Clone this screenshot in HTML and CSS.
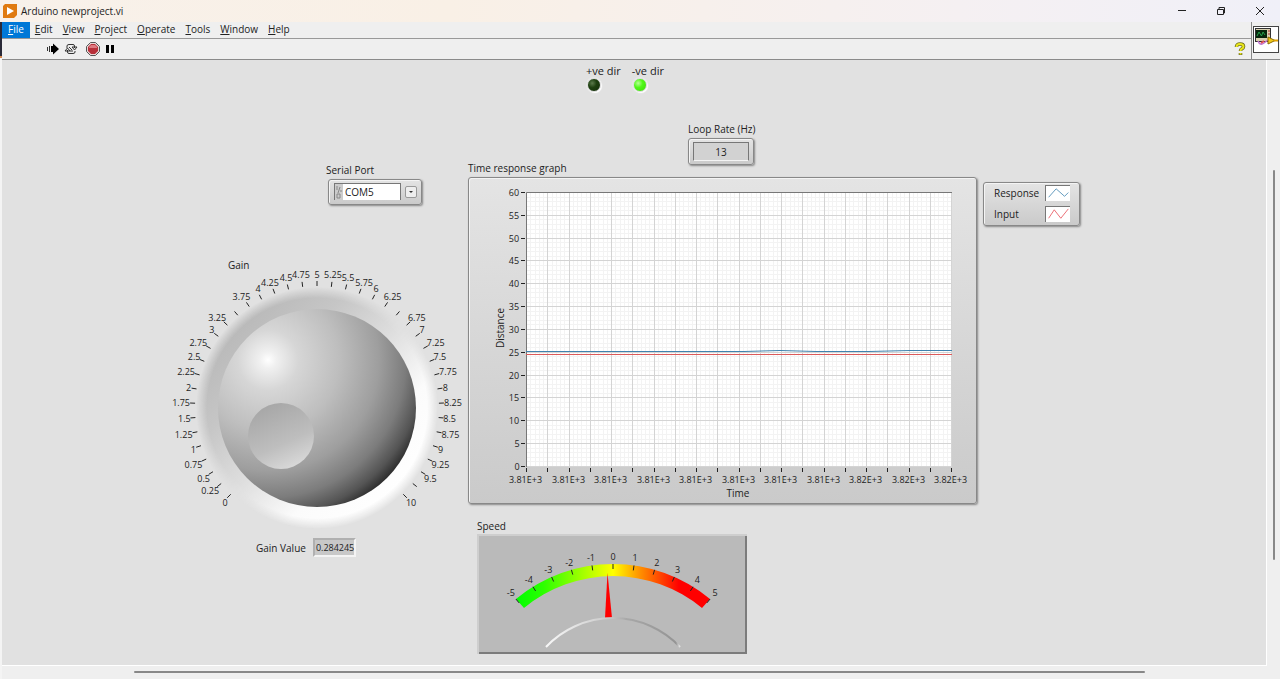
FILE: index.html
```html
<!DOCTYPE html>
<html lang="en">
<head>
    <meta charset="UTF-8">
    <meta name="viewport" content="width=device-width, initial-scale=1.0">
    <title>Arduino newproject.vi</title>
    <link rel="stylesheet" href="styles.css">
</head>
<body>
    <header class="titlebar">
        <svg class="app-icon" viewBox="0 0 14 14">
            <path d="M2 0H14V11L11 14H0V2Z" fill="#e07a10"/>
            <path d="M4 3L11 7L4 11Z" fill="#fff"/>
        </svg>
        <h1>Arduino newproject.vi</h1>
        <div class="window-buttons">
            <button aria-label="Minimize"><svg viewBox="0 0 10 10"><path d="M1 4.5H9"/></svg></button>
            <button aria-label="Restore"><svg viewBox="0 0 10 10"><path d="M1.5 3.5H7.5V8.5H1.5ZM3 3.5V1.5H8.5V7H7.5"/></svg></button>
            <button aria-label="Close"><svg viewBox="0 0 10 10"><path d="M1 1L9 9M9 1L1 9"/></svg></button>
        </div>
    </header>

    <div class="window">
        <div class="edge"></div>
        <div class="main">
            <div class="bars">
                <div class="bars-left">
                    <nav class="menu">
                        <button class="active"><u>F</u>ile</button>
                        <button><u>E</u>dit</button>
                        <button><u>V</u>iew</button>
                        <button><u>P</u>roject</button>
                        <button><u>O</u>perate</button>
                        <button><u>T</u>ools</button>
                        <button><u>W</u>indow</button>
                        <button><u>H</u>elp</button>
                    </nav>
                    <div class="toolbar">
                        <button aria-label="Run">
                            <svg viewBox="0 0 14 14">
                                <path d="M1.5 5V9M3.5 4V10" stroke="#333"/>
                                <path d="M5 4H7V1.5L13 7L7 12.5V10H5Z" fill="#000"/>
                            </svg>
                        </button>
                        <button aria-label="Run continuously">
                            <svg viewBox="0 0 14 14" fill="none" stroke="#333">
                                <path d="M3 6V4Q3 2.500 5 2.500H9Q10.500 2.500 10.500 4V6M8 5L10.500 8L13 5Z"/>
                                <path d="M11 9V10Q11 11.500 9 11.500H5Q3.500 11.500 3.500 10V8M1 9L3.500 6L6 9Z"/>
                                <path d="M5 5L8 8M6 9H9"/>
                            </svg>
                        </button>
                        <button class="abort" aria-label="Abort">
                            <svg viewBox="0 0 14 14">
                                <path d="M4.500 .5H9.500L13.500 4.500V9.500L9.500 13.500H4.500L.5 9.500V4.500Z" fill="#e8d5d5" stroke="#555"/>
                                <path d="M5 2H9L12 5V9L9 12H5L2 9V5Z" fill="#b8303a"/>
                                <path d="M5 3H9L11 5V6H3V5Z" fill="#dd7a80"/>
                            </svg>
                        </button>
                        <button class="pause" aria-label="Pause">
                            <svg viewBox="0 0 14 14"><path d="M2 3H5V11H2ZM7 3H10V11H7Z" fill="#000"/></svg>
                        </button>
                        <button class="help" aria-label="Context help">
                            <svg viewBox="0 0 14 14" fill="none">
                                <path d="M3.500 5Q3.500 2 7 2Q10.500 2 10.500 4.500Q10.500 6 8.500 7Q7.500 7.500 7.500 9M7.500 11V13" stroke="#6b6b1c" stroke-width="3.600"/>
                                <path d="M3.500 5Q3.500 2 7 2Q10.500 2 10.500 4.500Q10.500 6 8.500 7Q7.500 7.500 7.500 9M7.500 11V12.500" stroke="#e9e61c" stroke-width="2"/>
                            </svg>
                        </button>
                    </div>
                </div>
                <div class="vi-icon">
                    <svg viewBox="0 0 26 27">
                        <rect x=".5" y=".5" width="25" height="26" fill="#fff" stroke="#444"/>
                        <rect x="2.500" y="2.500" width="15" height="13" fill="#d8d0b0" stroke="#333"/>
                        <rect x="3" y="4" width="11" height="8" fill="#06250c"/>
                        <path d="M4 10L6 6L8.500 10L10 6L12 9" stroke="#24a04a" fill="none"/>
                        <path d="M15 5H17M15 8H17" stroke="#a33"/>
                        <path d="M5 15Q7 20 11 17L15 14" stroke="#c070d0" fill="none" stroke-width="1.500"/>
                        <path d="M8 17L11 15" stroke="#e05050" stroke-width="2"/>
                        <path d="M15 11L22 14.500L15 18Z" fill="#f0c818" stroke="#8a6a00"/>
                        <path d="M21 14.500H25" stroke="#e0a000" stroke-width="2"/>
                    </svg>
                </div>
            </div>

            <div class="workspace">
                <main class="panel">
                    <section class="gain-col">
                        <div class="serial">
                            <label for="port">Serial Port</label>
                            <div class="port-box bevel">
                                <svg class="io" viewBox="0 0 8 16" fill="none" stroke="#888">
                                    <path d="M2 2V6M5 3L3 9M6 6V8M2 10H5V14H2Z"/>
                                </svg>
                                <select id="port"><option>COM5</option></select>
                                <span class="drop"></span>
                            </div>
                        </div>
                        <div class="gain-title">Gain</div>
                        <svg id="knob" class="knob" viewBox="-149 -137 298 260" role="img" aria-label="Gain">
                            <defs>
                                <linearGradient id="ring" x1="0.150" y1="0.150" x2="0.850" y2="0.850">
                                    <stop offset="0" stop-color="#b8b8b8"/>
                                    <stop offset=".25" stop-color="#c6c6c6"/>
                                    <stop offset=".5" stop-color="#dedede"/>
                                    <stop offset=".75" stop-color="#fbfbfb"/>
                                    <stop offset="1" stop-color="#fff"/>
                                </linearGradient>
                                <radialGradient id="fade">
                                    <stop offset=".91" stop-color="#fff"/>
                                    <stop offset="1" stop-color="#000"/>
                                </radialGradient>
                                <mask id="soft"><circle r="121" fill="url(#fade)"/></mask>
                                <radialGradient id="ball" gradientUnits="userSpaceOnUse" cx="-49" cy="-48" r="168">
                                    <stop offset="0" stop-color="#fff"/>
                                    <stop offset=".05" stop-color="#f0f0f0"/>
                                    <stop offset=".18" stop-color="#d6d6d6"/>
                                    <stop offset=".42" stop-color="#bebebe"/>
                                    <stop offset=".66" stop-color="#9e9e9e"/>
                                    <stop offset=".82" stop-color="#7c7c7c"/>
                                    <stop offset=".93" stop-color="#545454"/>
                                    <stop offset="1" stop-color="#2c2c2c"/>
                                </radialGradient>
                                <linearGradient id="dimple" x1=".3" y1="0" x2=".75" y2="1">
                                    <stop offset="0" stop-color="#a6a6a6"/>
                                    <stop offset=".6" stop-color="#bebebe"/>
                                    <stop offset="1" stop-color="#dcdcdc"/>
                                </linearGradient>
                            </defs>
                            <circle r="121" fill="url(#ring)" mask="url(#soft)"/>
                            <circle r="99" fill="url(#ball)"/>
                            <circle cx="-36" cy="28" r="33" fill="url(#dimple)"/>
                            <g class="scale"></g>
                        </svg>
                        <div class="gain-value">
                            <label for="gain">Gain Value</label>
                            <input id="gain" type="text" value="0.284245" readonly>
                        </div>
                    </section>

                    <section class="graph-col">
                        <div class="leds">
                            <div class="led-item">+ve dir<span class="led"></span></div>
                            <div class="led-item">-ve dir<span class="led on"></span></div>
                        </div>
                        <div class="graph-head">
                            <h2>Time response graph</h2>
                            <div class="loop">
                                <label for="rate">Loop Rate (Hz)</label>
                                <div class="rate-box bevel"><input id="rate" type="text" value="13" readonly></div>
                            </div>
                        </div>
                        <div class="graph bevel">
                            <svg id="chart" viewBox="0 0 507 325" role="img" aria-label="Time response graph">
                                <rect x="57" y="14" width="426" height="275" fill="#fff"/>
                                <g class="grid"></g>
                                <path d="M57.500 289V14.500H483" fill="none" stroke="#777"/>
                                <path d="M57 176.500H483" class="line-input"/>
                                <path d="M57 173.500H275L311 172.500L347 173.500H400L441 172.500H483" class="line-response"/>
                                <g class="axes"></g>
                                <text class="title" x="269" y="315">Time</text>
                                <text class="title" transform="translate(31 150) rotate(-90)">Distance</text>
                            </svg>
                        </div>
                        <h2 class="speed-title">Speed</h2>
                        <div class="meter">
                            <svg id="meter" viewBox="-136 -182 270 120" role="img" aria-label="Speed">
                                <defs>
                                    <linearGradient id="speed" gradientUnits="userSpaceOnUse" x1="-97" y1="0" x2="97" y2="0">
                                        <stop offset="0" stop-color="#0f0"/>
                                        <stop offset=".14" stop-color="#2cff00"/>
                                        <stop offset=".5" stop-color="#ff0"/>
                                        <stop offset=".64" stop-color="#ff9000"/>
                                        <stop offset=".84" stop-color="#f00"/>
                                        <stop offset="1" stop-color="#f00"/>
                                    </linearGradient>
                                    <linearGradient id="hub" x1="0" x2="1">
                                        <stop offset="0" stop-color="#f8f8f8"/>
                                        <stop offset=".45" stop-color="#ccc"/>
                                        <stop offset=".6" stop-color="#a8a8a8"/>
                                        <stop offset=".97" stop-color="#949494"/>
                                        <stop offset="1" stop-color="#e8e8e8"/>
                                    </linearGradient>
                                </defs>
                                <path d="M-97 -117A152 152 0 0 1 97 -117L89 -108A140 140 0 0 0 -89 -108Z" fill="url(#speed)"/>
                                <path d="M-5.500 -143L-1 -98H-8Z" fill="#f00"/>
                                <path d="M-67 -69A92 92 0 0 1 67 -69" fill="none" stroke="url(#hub)" stroke-width="2"/>
                                <g class="scale"></g>
                            </svg>
                        </div>
                    </section>

                    <section class="legend-col">
                        <ul class="legend bevel">
                            <li>Response
                                <svg viewBox="0 0 24 16"><path d="M2 12L10 3L19 11L23 7" stroke="#5b95bb"/></svg>
                            </li>
                            <li>Input
                                <svg viewBox="0 0 24 16"><path d="M2 12L8 3L15 12L23 2" stroke="#ea6870"/></svg>
                            </li>
                        </ul>
                    </section>
                </main>
                <div class="vscroll"><div class="thumb"></div></div>
            </div>
            <div class="hscroll"><div class="thumb"></div></div>
        </div>
    </div>
    <script src="script.js"></script>
</body>
</html>
```
FILE: styles.css
```css
* {
    box-sizing: border-box;
}
body {
    margin: 0;
    min-height: 100vh;
    display: flex;
    flex-direction: column;
    background-color: #efefef;
    color: #222;
    font-family: "Open Sans", sans-serif;
    font-size: 10px;
    line-height: 12px;
}
button, input, select {
    font: inherit;
    color: inherit;
}
button {
    border: none;
    background: none;
    padding: 0;
}
svg {
    display: block;
}
h1, h2 {
    margin: 0;
    font-size: inherit;
    font-weight: normal;
}
.titlebar {
    display: flex;
    align-items: center;
    height: 22px;
    padding-left: 3px;
    background: linear-gradient(to right, #f8f1ea, #f9f0e6 35%, #f5f0f2 75%, #f0f0f8);
}
.app-icon {
    width: 14px;
    height: 14px;
    margin-right: 4px;
}
.window-buttons {
    display: flex;
    margin-left: auto;
    padding-right: 1px;
}
.window-buttons button {
    width: 39px;
    height: 20px;
    display: flex;
    align-items: center;
    justify-content: center;
}
.window-buttons svg {
    width: 10px;
    height: 10px;
    fill: none;
    stroke: #222;
}
.window {
    flex: 1;
    display: flex;
}
.edge {
    width: 2px;
    background: linear-gradient(#2a2a38 34px, #d98a50 34px, #d98a50 36px, #f4f4f4 36px);
}
.main {
    flex: 1;
    min-width: 0;
    display: flex;
    flex-direction: column;
}
.bars {
    display: flex;
    border-bottom: 1px solid #8a8a8a;
}
.bars-left {
    flex: 1;
    border-right: 1px solid #8a8a8a;
}
.menu {
    display: flex;
    height: 17px;
    border-bottom: 1px solid #999;
}
.menu button {
    padding: 0 5px 2px;
    line-height: 12px;
}
.menu .active {
    padding: 0 6px 2px;
    background-color: #0078d7;
    color: #fff;
}
.toolbar {
    display: flex;
    align-items: center;
    height: 20px;
    padding-left: 44px;
    gap: 4px;
}
.toolbar svg {
    width: 14px;
    height: 14px;
}
.abort {
    margin-left: 4px;
}
.toolbar .help {
    margin-left: auto;
    margin-right: 4px;
}
.vi-icon {
    width: 28px;
    padding: 4px 1px;
}
.vi-icon svg {
    width: 26px;
    height: 27px;
}
.workspace {
    flex: 1;
    display: flex;
}
.panel {
    flex: 1;
    display: grid;
    grid-template-columns: 466px minmax(0, 1fr) 289px;
    background-color: #e1e1e1;
    border-right: 1px solid #fff;
    border-bottom: 1px solid #fff;
}
.vscroll {
    width: 13px;
    padding: 110px 5px 0 6px;
}
.vscroll .thumb {
    height: 390px;
    border-radius: 1px;
    background-color: #888;
}
.hscroll {
    height: 13px;
    padding: 5px 135px 0 132px;
}
.hscroll .thumb {
    height: 2px;
    border-radius: 1px;
    background-color: #888;
}
.bevel {
    border: 1px solid #888;
    border-radius: 3px;
    background: linear-gradient(#e4e4e4, #cacaca);
    box-shadow: inset 1px 1px 0 #f4f4f4, 1px 1px 2px rgba(0, 0, 0, 0.4);
}
.gain-col {
    padding: 104px 0 0 166px;
}
.serial {
    padding-left: 158px;
}
.serial label {
    display: block;
    margin-bottom: 3px;
}
.port-box {
    display: flex;
    align-items: center;
    width: 94px;
    height: 26px;
    margin-left: 2px;
    padding: 0 4px 1px 5px;
}
.io {
    width: 9px;
    height: 17px;
    border: solid #777;
    border-width: 1px 0 0 1px;
    background-color: #ccc;
}
.port-box select {
    appearance: none;
    flex: 1;
    min-width: 0;
    height: 17px;
    padding: 0 2px 1px;
    border: solid #777;
    border-width: 1px 1px 0 0;
    border-radius: 0;
    background-color: #fff;
}
.drop {
    display: flex;
    align-items: center;
    justify-content: center;
    width: 12px;
    height: 12px;
    margin-left: 4px;
    border: 1px solid #999;
    border-radius: 2px;
    background-color: #eee;
}
.drop::after {
    content: "";
    border: 2px solid transparent;
    border-top-color: #333;
    border-bottom: none;
}
.gain-title {
    margin-top: 54px;
    padding-left: 60px;
}
.knob {
    width: 298px;
    height: 260px;
    overflow: visible;
}
svg text {
    font-size: 9px;
    fill: #222;
    text-anchor: middle;
    dominant-baseline: central;
}
svg .title {
    font-size: 10px;
}
.scale path, .axes path {
    stroke: #222;
    fill: none;
}
.gain-value {
    display: flex;
    align-items: center;
    gap: 7px;
    margin-top: 7px;
    padding-left: 88px;
}
.gain-value input {
    width: 43px;
    height: 19px;
    padding: 0 0 0 1px;
    border: 2px solid #b0b0b0;
    border-right-color: #f4f4f4;
    border-bottom-color: #f4f4f4;
    background-color: #c8c8c8;
    font-size: 9px;
}
.leds {
    display: flex;
    gap: 11px;
    padding: 5px 0 0 118px;
    font-size: 11px;
}
.led {
    display: block;
    width: 14px;
    height: 14px;
    margin: 1px 0 0 1px;
    border-radius: 50%;
    border: 1px solid #ddd;
    background: radial-gradient(circle at 35% 35%, #5c7a4c, #1e4010 40%, #142c0a);
    box-shadow: 0 0 2px #fff, 1px 1px 1px #fff;
}
.led.on {
    background: radial-gradient(circle at 35% 35%, #b8ff98, #50f818 40%, #3cd808);
}
.graph-head {
    display: flex;
    align-items: flex-end;
    margin-top: 31px;
}
.graph-head h2 {
    width: 220px;
}
.loop {
    padding-bottom: 9px;
}
.loop label {
    display: block;
    white-space: nowrap;
    margin-bottom: 3px;
}
.rate-box {
    width: 66px;
    height: 27px;
    padding: 3px 4px;
}
.rate-box input {
    display: block;
    width: 100%;
    height: 19px;
    padding: 0;
    border: 1px solid #777;
    border-bottom-color: #f4f4f4;
    background-color: #d2d2d2;
    text-align: center;
}
.graph {
    margin-top: 3px;
}
.graph svg {
    width: 100%;
}
.minor {
    stroke: #f3f3f3;
}
.major {
    stroke: #d4d4d4;
}
.line-response {
    fill: none;
    stroke: #3f82ae;
}
.line-input {
    fill: none;
    stroke: #dc5a5a;
}
.speed-title {
    margin-top: 16px;
    padding-left: 9px;
}
.meter {
    width: 270px;
    margin: 2px 0 10px 9px;
    background-color: #bababa;
    box-shadow: inset 2px 2px 0 #cecece, inset -2px -2px 0 #7c7c7c;
}
.meter svg {
    width: 100%;
}
.legend {
    display: inline-block;
    width: 97px;
    margin: 122px 0 0 6px;
    padding: 0 9px 0 10px;
    list-style: none;
}
.legend li {
    display: flex;
    align-items: center;
    justify-content: space-between;
    height: 21px;
    padding-bottom: 2px;
}
.legend svg {
    width: 25px;
    height: 16px;
    border: solid #777;
    border-width: 1px 0 0 1px;
    background-color: #fff;
    fill: none;
}
```
FILE: script.js
```js
function point(angle, r) {
    var a = angle * Math.PI / 180;
    return [Math.sin(a) * r, -Math.cos(a) * r];
}

function tick(angle, from, to) {
    return '<path d="M' + point(angle, from) + 'L' + point(angle, to) + '"/>';
}

function label(x, y, text) {
    return '<text x="' + x + '" y="' + y + '">' + text + '</text>';
}

function drawKnob() {
    var hidden = [3.5, 6.5, 9.75];
    var halfWidth = [0, 3, 6, 6, 9];
    var out = '';
    for (var v = 0; v <= 10; v += 0.25) {
        var angle = (v - 5) * 27;
        out += tick(angle, 122, 127);
        if (hidden.indexOf(v) >= 0) continue;
        var dir = point(angle, 1);
        out += label(dir[0] * (127 + halfWidth[String(v).length]), dir[1] * 134, v);
    }
    document.querySelector('#knob .scale').innerHTML = out;
}

function drawMeter() {
    var out = '';
    for (var v = -5; v <= 5; v++) {
        var angle = v * 7.94;
        var p = point(angle, 160);
        out += tick(angle, 147, 152) + label(p[0], p[1], v);
    }
    document.querySelector('#meter .scale').innerHTML = out;
}

function drawChart() {
    var left = 57.5, bottom = 288.5, width = 425, height = 274;
    var grid = '', axes = '', i, x, y;
    for (i = 1; i <= 100; i++) {
        x = left + Math.round(i * width / 100);
        grid += '<path class="minor" d="M' + x + ' 15V289"/>';
    }
    for (i = 1; i < 60; i++) {
        y = bottom - Math.round(i * height / 60);
        grid += '<path class="minor" d="M57 ' + y + 'H483"/>';
    }
    for (i = 0; i <= 20; i++) {
        x = left + Math.round(i * width / 20);
        grid += '<path class="major" d="M' + x + ' 15V289"/>';
        axes += '<path d="M' + x + ' 290V294"/>';
        if (i % 2 === 0) axes += label(x - 1, 301, i < 16 ? '3.81E+3' : '3.82E+3');
    }
    for (i = 0; i <= 12; i++) {
        y = bottom - Math.round(i * height / 12);
        grid += '<path class="major" d="M57 ' + y + 'H483"/>';
        axes += '<path d="M52 ' + y + 'H56"/>';
        axes += label(i < 2 ? 48 : 45, y, i * 5);
    }
    document.querySelector('#chart .grid').innerHTML = grid;
    document.querySelector('#chart .axes').innerHTML = axes;
}

drawKnob();
drawMeter();
drawChart();
```
